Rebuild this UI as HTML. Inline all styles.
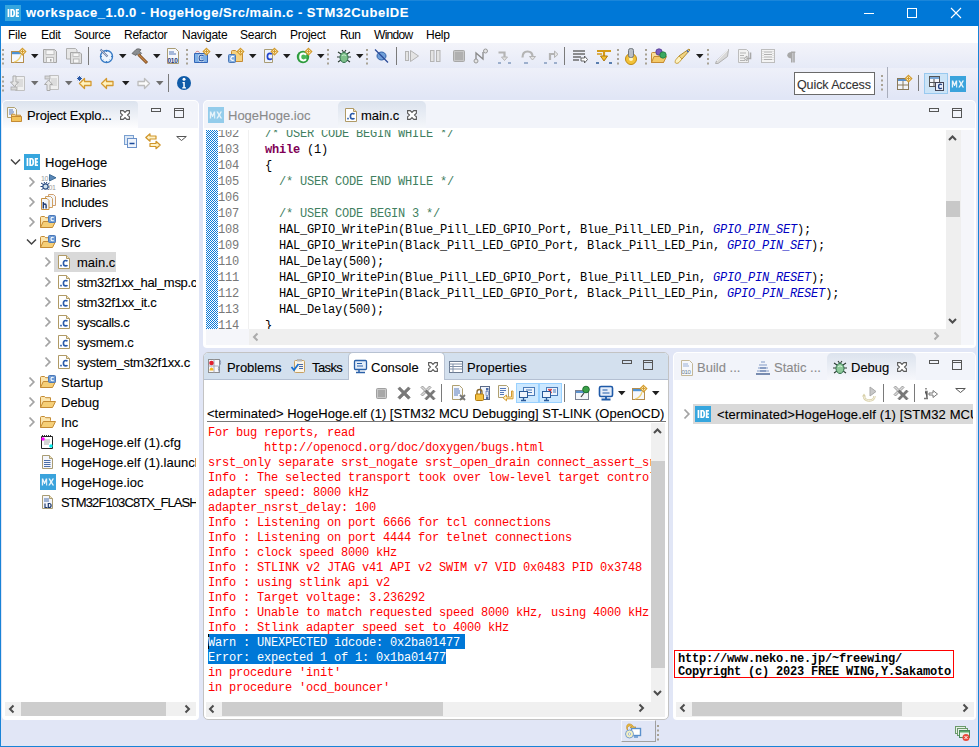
<!DOCTYPE html>
<html><head><meta charset="utf-8">
<style>
*{margin:0;padding:0;box-sizing:border-box}
html,body{width:979px;height:747px;overflow:hidden;background:#E1E6F6;position:relative;font-family:"Liberation Sans",sans-serif;font-size:13px;color:#000}
.a{position:absolute}
.t{position:absolute;white-space:pre;line-height:16px;padding-top:1px;-webkit-text-stroke:0.1px currentColor}
.m{padding-top:0;-webkit-text-stroke:0}
.m{font-family:"Liberation Mono",monospace;font-size:12px;letter-spacing:-0.2px}
svg{position:absolute;overflow:visible}
</style></head><body>
<!-- window borders -->
<div class="a" style="left:0;top:0;width:1px;height:747px;background:#1883d7"></div>
<div class="a" style="left:978px;top:0;width:1px;height:747px;background:#1883d7"></div>
<div class="a" style="left:0;top:746px;width:979px;height:1px;background:#1883d7"></div>

<!-- title bar -->
<div class="a" style="left:0;top:0;width:979px;height:26px;background:#0078D7"></div>
<div class="a" style="left:0;top:0;width:979px;height:1px;background:#1a86da"></div>

<div class="t" style="left:26px;top:4px;font-size:13px;letter-spacing:0.5px;font-weight:bold;color:#fff">workspace_1.0.0 - HogeHoge/Src/main.c - STM32CubeIDE</div>
<div class="a" style="left:864px;top:13px;width:10px;height:1px;background:#fff"></div>
<div class="a" style="left:907px;top:8px;width:10px;height:10px;border:1px solid #fff"></div>
<svg style="left:951px;top:8px" width="10" height="10"><path d="M0 0L10 10M10 0L0 10" stroke="#fff" stroke-width="1.1"/></svg>

<!-- menu bar -->
<div class="a" style="left:1px;top:26px;width:977px;height:17px;background:#fff"></div>
<div class="t" style="left:8px;top:26px;font-size:12px;line-height:16px;-webkit-text-stroke:0;letter-spacing:-0.25px">File</div>
<div class="t" style="left:41px;top:26px;font-size:12px;line-height:16px;-webkit-text-stroke:0;letter-spacing:-0.25px">Edit</div>
<div class="t" style="left:74px;top:26px;font-size:12px;line-height:16px;-webkit-text-stroke:0;letter-spacing:-0.25px">Source</div>
<div class="t" style="left:124px;top:26px;font-size:12px;line-height:16px;-webkit-text-stroke:0;letter-spacing:-0.25px">Refactor</div>
<div class="t" style="left:182px;top:26px;font-size:12px;line-height:16px;-webkit-text-stroke:0;letter-spacing:-0.25px">Navigate</div>
<div class="t" style="left:240px;top:26px;font-size:12px;line-height:16px;-webkit-text-stroke:0;letter-spacing:-0.25px">Search</div>
<div class="t" style="left:290px;top:26px;font-size:12px;line-height:16px;-webkit-text-stroke:0;letter-spacing:-0.25px">Project</div>
<div class="t" style="left:340px;top:26px;font-size:12px;line-height:16px;-webkit-text-stroke:0;letter-spacing:-0.6px">Run</div>
<div class="t" style="left:374px;top:26px;font-size:12px;line-height:16px;-webkit-text-stroke:0;letter-spacing:-0.7px">Window</div>
<div class="t" style="left:426px;top:26px;font-size:12px;line-height:16px;-webkit-text-stroke:0;letter-spacing:-0.25px">Help</div>

<!-- toolbars -->
<div class="a" style="left:1px;top:43px;width:977px;height:25px;background:linear-gradient(#f3f4fa,#e6eaf7)"></div>
<div class="a" style="left:1px;top:68px;width:977px;height:30px;background:linear-gradient(#eef0f9,#e1e6f6)"></div>
<div id="tb"></div>

<!-- ===== Project Explorer ===== -->
<div class="a" style="left:2px;top:100px;width:197px;height:620px;background:#fff;border-radius:5px 5px 4px 4px"></div>
<div class="a" style="left:3px;top:101px;width:195px;height:27px;background:#f2f4fa;border-radius:4px 4px 0 0"></div>
<div class="a" style="left:3px;top:101px;width:135px;height:27px;background:linear-gradient(#dce3ee,#fdfdfe);border-radius:4px 4px 0 0"></div>
<div class="t" style="left:27px;top:107px;font-size:13px;letter-spacing:-0.17px">Project Explo...</div>
<div id="pe">
<div class="a" style="left:5px;top:130px;width:191px;height:572px;overflow:hidden">
<div class="t" style="left:40px;top:24px">HogeHoge</div>
<div class="t" style="left:56px;top:44px;letter-spacing:-0.25px">Binaries</div>
<div class="t" style="left:56px;top:64px;letter-spacing:-0.18px">Includes</div>
<div class="t" style="left:56px;top:84px;letter-spacing:-0.05px">Drivers</div>
<div class="t" style="left:56px;top:104px">Src</div>
<div class="a" style="left:49px;top:122px;width:62px;height:20px;background:#d9d9d9"></div>
<div class="t" style="left:72px;top:124px">main.c</div>
<div class="t" style="left:72px;top:144px;letter-spacing:-0.3px">stm32f1xx_hal_msp.c</div>
<div class="t" style="left:72px;top:164px;letter-spacing:-0.25px">stm32f1xx_it.c</div>
<div class="t" style="left:72px;top:184px;letter-spacing:-0.31px">syscalls.c</div>
<div class="t" style="left:72px;top:204px;letter-spacing:-0.24px">sysmem.c</div>
<div class="t" style="left:72px;top:224px;letter-spacing:-0.27px">system_stm32f1xx.c</div>
<div class="t" style="left:56px;top:244px">Startup</div>
<div class="t" style="left:56px;top:264px">Debug</div>
<div class="t" style="left:56px;top:284px">Inc</div>
<div class="t" style="left:56px;top:304px">HogeHoge.elf (1).cfg</div>
<div class="t" style="left:56px;top:324px">HogeHoge.elf (1).launch</div>
<div class="t" style="left:56px;top:344px">HogeHoge.ioc</div>
<div class="t" style="left:56px;top:364px;letter-spacing:-0.9px">STM32F103C8TX_FLASH.ld</div>
</div>
<div class="a" style="left:5px;top:702px;width:191px;height:14px;background:#f0f0f0"></div>
<div class="a" style="left:21px;top:702px;width:145px;height:14px;background:#cdcdcd"></div>
</div>

<!-- ===== Editor ===== -->
<div class="a" style="left:203px;top:100px;width:773px;height:248px;background:#fff;border-radius:5px 5px 4px 4px"></div>
<div class="a" style="left:204px;top:101px;width:771px;height:27px;background:#f2f4fa;border-radius:4px 4px 0 0"></div>
<div class="a" style="left:338px;top:101px;width:88px;height:27px;background:linear-gradient(#dce3ee,#f4f6fa);border-radius:5px 5px 0 0"></div>
<div class="t" style="left:228px;top:107px;font-size:13px;color:#8a8a8a">HogeHoge.ioc</div>
<div class="t" style="left:361px;top:107px;font-size:13px">main.c</div>
<div id="ed">
<div class="a" style="left:206px;top:130px;width:743px;height:199px;overflow:hidden">
 <svg style="left:0;top:0" width="12" height="199"><defs><pattern id="chk" width="2" height="2" patternUnits="userSpaceOnUse"><rect width="2" height="2" fill="#fff"/><rect width="1" height="1" fill="#0a79d8"/><rect x="1" y="1" width="1" height="1" fill="#0a79d8"/></pattern></defs><rect width="12" height="199" fill="url(#chk)" shape-rendering="crispEdges"/></svg>
 <div class="t m" style="left:12px;top:-4px;color:#787878">102
103
104
105
106
107
108
109
110
111
112
113
114</div>
 <div class="a" style="left:42px;top:0;width:1px;height:199px;background:#f0f0f0"></div>
 <div class="t m" style="left:45px;top:-4px;color:#000">  <span style="color:#3F7F5F">/* USER CODE BEGIN WHILE */</span>
  <b style="color:#7F0055">while</b> (1)
  {
    <span style="color:#3F7F5F">/* USER CODE END WHILE */</span>

    <span style="color:#3F7F5F">/* USER CODE BEGIN 3 */</span>
    HAL_GPIO_WritePin(Blue_Pill_LED_GPIO_Port, Blue_Pill_LED_Pin, <i style="color:#0000C0">GPIO_PIN_SET</i>);
    HAL_GPIO_WritePin(Black_Pill_LED_GPIO_Port, Black_Pill_LED_Pin, <i style="color:#0000C0">GPIO_PIN_SET</i>);
    HAL_Delay(500);
    HAL_GPIO_WritePin(Blue_Pill_LED_GPIO_Port, Blue_Pill_LED_Pin, <i style="color:#0000C0">GPIO_PIN_RESET</i>);
    HAL_GPIO_WritePin(Black_Pill_LED_GPIO_Port, Black_Pill_LED_Pin, <i style="color:#0000C0">GPIO_PIN_RESET</i>);
    HAL_Delay(500);
  }</div>
</div>
<div class="a" style="left:946px;top:130px;width:15px;height:215px;background:#efefef"></div>
<div class="a" style="left:946px;top:201px;width:14px;height:16px;background:#c8c8c8"></div>
<div class="a" style="left:961px;top:130px;width:13px;height:215px;background:#f5f6fa"></div>
<div class="a" style="left:206px;top:329px;width:43px;height:16px;background:#f5f6fa"></div>
<div class="a" style="left:249px;top:329px;width:697px;height:16px;background:#efefef"></div>
</div>

<!-- ===== Console ===== -->
<div class="a" style="left:203px;top:352px;width:466px;height:368px;background:#fff;border:1px solid #c3c3c3;border-radius:5px 5px 5px 5px"></div>
<div class="a" style="left:204px;top:353px;width:464px;height:27px;background:#d3e0ee;border-radius:4px 4px 0 0;border-bottom:1px solid #b4c0d2"></div>
<div class="a" style="left:348px;top:352px;width:97px;height:28px;background:#fff;border:1px solid #b8c2d2;border-bottom:none;border-radius:5px 5px 0 0"></div>
<div class="t" style="left:227px;top:359px;letter-spacing:-0.05px">Problems</div>
<div class="t" style="left:312px;top:359px;letter-spacing:-0.6px">Tasks</div>
<div class="t" style="left:371px;top:359px">Console</div>
<div class="t" style="left:467px;top:359px;letter-spacing:0.05px">Properties</div>
<div class="t" style="left:207px;top:405px">&lt;terminated&gt; HogeHoge.elf (1) [STM32 MCU Debugging] ST-LINK (OpenOCD)</div>
<div class="a" style="left:207px;top:421px;width:459px;height:1px;background:#777"></div>
<div id="co">
<div class="a" style="left:206px;top:423px;width:445px;height:279px;overflow:hidden">
 <div class="a" style="left:2px;top:211px;width:257px;height:15px;background:#0078d7"></div>
 <div class="a" style="left:2px;top:226px;width:238px;height:15px;background:#0078d7"></div>
 <div class="a" style="left:2px;top:211px;width:1px;height:15px;background:#000"></div>
 <div class="t m" style="left:2px;top:3px;line-height:15px;color:#f00">For bug reports, read
        http://openocd.org/doc/doxygen/bugs.html
srst_only separate srst_nogate srst_open_drain connect_assert_srst
Info : The selected transport took over low-level target control.
adapter speed: 8000 kHz
adapter_nsrst_delay: 100
Info : Listening on port 6666 for tcl connections
Info : Listening on port 4444 for telnet connections
Info : clock speed 8000 kHz
Info : STLINK v2 JTAG v41 API v2 SWIM v7 VID 0x0483 PID 0x3748
Info : using stlink api v2
Info : Target voltage: 3.236292
Info : Unable to match requested speed 8000 kHz, using 4000 kHz
Info : Stlink adapter speed set to 4000 kHz
<span style="color:#fff">Warn : UNEXPECTED idcode: 0x2ba01477</span>
<span style="color:#fff">Error: expected 1 of 1: 0x1ba01477</span>
in procedure 'init'
in procedure 'ocd_bouncer'</div>
</div>
<div class="a" style="left:651px;top:423px;width:14px;height:279px;background:#f0f0f0"></div>
<div class="a" style="left:651px;top:461px;width:14px;height:207px;background:#cdcdcd"></div>
<div class="a" style="left:206px;top:702px;width:459px;height:15px;background:#f0f0f0"></div>
<div class="a" style="left:222px;top:702px;width:221px;height:14px;background:#cdcdcd"></div>
</div>

<!-- ===== Debug ===== -->
<div class="a" style="left:673px;top:352px;width:303px;height:368px;background:#fff;border-radius:5px 5px 4px 4px"></div>
<div class="a" style="left:674px;top:353px;width:301px;height:27px;background:#f2f4fa;border-radius:4px 4px 0 0"></div>
<div class="a" style="left:827px;top:353px;width:89px;height:27px;background:linear-gradient(#dce3ee,#f6f7fb);border-radius:5px 5px 0 0"></div>
<div class="t" style="left:697px;top:359px;color:#8a8a8a">Build ...</div>
<div class="t" style="left:774px;top:359px;color:#8a8a8a">Static ...</div>
<div class="t" style="left:851px;top:359px">Debug</div>
<div id="db">
<div class="a" style="left:676px;top:403px;width:297px;height:299px;overflow:hidden">
<div class="a" style="left:17px;top:1px;width:290px;height:20px;background:#d9d9d9"></div>
<div class="t" style="left:41px;top:3px;letter-spacing:0.12px">&lt;terminated&gt;HogeHoge.elf (1) [STM32 MCU Debugging] ST-LINK (OpenOCD)</div>
</div>
<div class="a" style="left:674px;top:650px;width:280px;height:28px;border:1px solid #f00;background:#fff"></div>
<div class="t m" style="left:678px;top:653px;font-weight:bold;line-height:13px">http://www.neko.ne.jp/~freewing/
Copyright (c) 2023 FREE WING,Y.Sakamoto</div>
<div class="a" style="left:676px;top:702px;width:298px;height:15px;background:#f0f0f0"></div>
<div class="a" style="left:692px;top:702px;width:210px;height:14px;background:#cdcdcd"></div>
</div>

<svg width="0" height="0" style="position:absolute"><defs><symbol id="ide" viewBox="0 0 16 16" overflow="visible"><rect width="16" height="16" fill="#36a6de"/><path fill-rule="evenodd" d="M2.6 4h1.7v8H2.6zM5.3 4h2.3c1.7 0 2.5 1.3 2.5 4s-.8 4-2.5 4H5.3zM7 5.5v5h.5c.6 0 .9-.8.9-2.5s-.3-2.5-.9-2.5zM10.8 4h3.2v1.5h-1.5v1.7H14v1.5h-1.5v1.8H14V12h-3.2z" fill="#fff"/></symbol><symbol id="mx" viewBox="0 0 16 16" overflow="visible"><rect width="16" height="16" fill="#3aa3dc"/><path d="M1.8 11.5v-7h1.4l1.3 3.3 1.3-3.3h1.4v7H6.1V7.4L5 10.1h-.9L3.1 7.4v4.1zM8.4 4.5h1.6l1.2 2.2 1.2-2.2H14l-1.9 3.4 2 3.6h-1.6l-1.3-2.3-1.3 2.3H8.3l2-3.6z" fill="#eaf5fb"/></symbol><symbol id="mxl" viewBox="0 0 16 16" overflow="visible"><rect width="16" height="16" fill="#93cceb"/><path d="M1.8 11.5v-7h1.4l1.3 3.3 1.3-3.3h1.4v7H6.1V7.4L5 10.1h-.9L3.1 7.4v4.1zM8.4 4.5h1.6l1.2 2.2 1.2-2.2H14l-1.9 3.4 2 3.6h-1.6l-1.3-2.3-1.3 2.3H8.3l2-3.6z" fill="#e6f3fa"/></symbol><symbol id="chevR" viewBox="0 0 16 16" overflow="visible"><path d="M1.5 3.5l4.3 4.5-4.3 4.5" stroke="#a4a4a4" stroke-width="1.8" fill="none"/></symbol><symbol id="chevD" viewBox="0 0 16 16" overflow="visible"><path d="M1 5.5l4.5 4.5 4.5-4.5" stroke="#444" stroke-width="1.5" fill="none"/></symbol><symbol id="chevRd" viewBox="0 0 16 16" overflow="visible"><path d="M1 1l4 4-4 4" stroke="#555" stroke-width="1.6" fill="none"/></symbol><symbol id="fold" viewBox="0 0 16 16" overflow="visible"><path d="M.5 12.5V2.5c0-.6.4-1 1-1h3l1.2 1.2h4.8v3" fill="#fbe6b0" stroke="#c58b34"/><path d="M.5 12.5l2.8-6h12.2l-3 6z" fill="#f5cf78" stroke="#c58b34" stroke-linejoin="round"/></symbol><symbol id="foldc" viewBox="0 0 16 16" overflow="visible"><path d="M.5 12.5V2.5c0-.6.4-1 1-1h3l1.2 1.2h4.8v3" fill="#fbe6b0" stroke="#c58b34"/><path d="M.5 12.5l2.8-6h12.2l-3 6z" fill="#f5cf78" stroke="#c58b34" stroke-linejoin="round"/><rect x="8.5" y=".5" width="7" height="7" rx="1" fill="#6f9cd6" stroke="#4a78b8"/><path d="M13.6 2.6c-.3-.3-.7-.4-1.1-.4-.9 0-1.5.7-1.5 1.8s.6 1.8 1.5 1.8c.4 0 .8-.1 1.1-.4" stroke="#fff" stroke-width="1.1" fill="none"/></symbol><symbol id="cfile" viewBox="0 0 16 16" overflow="visible"><path d="M2.5 1.5h8l3 3v10h-11z" fill="#fff" stroke="#b09a66"/><path d="M10.5 1.5v3h3" fill="#efe2bc" stroke="#b09a66"/><rect x="4.2" y="10.8" width="1.6" height="1.6" fill="#2a5aa8"/><path d="M11.5 7.2c-.5-.5-1.1-.7-1.8-.7-1.4 0-2.3 1.1-2.3 2.7s.9 2.7 2.3 2.7c.7 0 1.3-.2 1.8-.7" stroke="#2a5aa8" stroke-width="1.6" fill="none"/></symbol><symbol id="cfg" viewBox="0 0 16 16" overflow="visible"><path d="M1.5 2.5h11v12h-11z" fill="#fff" stroke="#222"/><path d="M2 1.5h10" stroke="#333" stroke-dasharray="1 1"/><path d="M4 6h6M4 8h6M4 10h5" stroke="#aaa"/><circle cx="3" cy="5" r="1.8" fill="#f0f"/><circle cx="11" cy="12" r="1.8" fill="#0ee"/></symbol><symbol id="launch" viewBox="0 0 16 16" overflow="visible"><path d="M2.5 1.5h7l3 3v10h-10z" fill="#f4f6fb" stroke="#a99c74"/><path d="M9.5 1.5v3h3" fill="#efe2bc" stroke="#a99c74"/><path d="M4 6.5h6.5M4 8.5h6.5M4 10.5h6.5M4 12.5h6.5" stroke="#4c6ea8"/></symbol><symbol id="ld" viewBox="0 0 16 16" overflow="visible"><path d="M2.5 1.5h7l3 3v10h-10z" fill="#f4f6fb" stroke="#a99c74"/><path d="M9.5 1.5v3h3" fill="#efe2bc" stroke="#a99c74"/><path d="M4 5h5M4 7h5" stroke="#4c6ea8"/><path d="M5 9.5v4h2.3M8.3 9.5v4h1c1.2 0 1.8-.6 1.8-2s-.6-2-1.8-2z" stroke="#1e3a6e" stroke-width="1.2" fill="none"/></symbol><symbol id="bin" viewBox="0 0 16 16" overflow="visible"><text x="1" y="6.5" font-family="Liberation Sans" font-size="7" fill="#9a9a9a" letter-spacing="-.4">10</text><path d="M9.5 .5v6.5L16 3.8z" fill="#5a88b8" stroke="#2a5a88" stroke-width=".8"/><path d="M1 9l2.5 1.5M.5 12.5h3M1.5 16l2-2M9.5 9L7.5 10.5M9.5 13H7.5M8.5 16l-1.5-2M4 8l1 1.5M7 8l-1 1.5" stroke="#1f3f7a" stroke-width="1"/><circle cx="5.5" cy="12.5" r="2.6" fill="#cfe0ec" stroke="#2a4a80" stroke-width="1.1"/><text x="8.5" y="15.5" font-family="Liberation Sans" font-size="7" fill="#9a9a9a" letter-spacing="-.4">01</text></symbol><symbol id="inc" viewBox="0 0 16 16" overflow="visible"><path d="M8.5 .5h5l2 2v9h-7z" fill="#f4f7fb" stroke="#d0a070"/><path d="M5.5 2.5h5l2 2v9h-7z" fill="#f4f7fb" stroke="#d0a060"/><path d="M1.5 4.5h5.5l2 2v9H1.5z" fill="#f4f7fb" stroke="#c89040"/><path d="M3.3 8v6.5M3.3 11c.4-.7 1-1 1.6-1s1.2.4 1.2 1.3v3.2" stroke="#203a70" stroke-width="1.4" fill="none"/></symbol><symbol id="grip" viewBox="0 0 16 16" overflow="visible"><rect x="0" y="0" width="2" height="2" fill="#a8a294"/><rect x="0" y="4.5" width="2" height="2" fill="#a8a294"/><rect x="0" y="9" width="2" height="2" fill="#a8a294"/><rect x="0" y="13.5" width="2" height="2" fill="#a8a294"/></symbol><symbol id="dd" viewBox="0 0 16 16" overflow="visible"><path d="M0 0h7.5l-3.75 4.2z" fill="#1e1e1e"/></symbol><symbol id="ddg" viewBox="0 0 16 16" overflow="visible"><path d="M0 0h7.5l-3.75 4.2z" fill="#6e6e6e"/></symbol><symbol id="closex" viewBox="0 0 16 16" overflow="visible"><path d="M.6 .6h2.6l1.8 1.9L6.8.6h2.6v2.6L7.5 5l1.9 1.8v2.6H6.8L5 7.5 3.2 9.4H.6V6.8L2.5 5 .6 3.2z" fill="#fff" stroke="#5a5a5a" stroke-width="1.1" stroke-linejoin="miter"/></symbol><symbol id="minb" viewBox="0 0 16 16" overflow="visible"><rect x=".5" y=".5" width="9" height="3" fill="none" stroke="#555"/></symbol><symbol id="maxb" viewBox="0 0 16 16" overflow="visible"><rect x=".5" y=".5" width="9" height="9" fill="none" stroke="#555"/><path d="M1 2.5h8" stroke="#555"/></symbol><symbol id="vmenu" viewBox="0 0 16 16" overflow="visible"><path d="M.7 .5h9.6L5.5 4.5z" fill="#fff" stroke="#555" stroke-width="1"/></symbol><symbol id="new" viewBox="0 0 16 16" overflow="visible"><rect x="1.5" y="3.5" width="12" height="11" fill="#f6f8fc" stroke="#b58e4e"/><rect x="2" y="4" width="11" height="2.2" fill="#4f93d4"/><path d="M4 14c4-1 6-3 7-7" stroke="#f0d070" stroke-width="1.2" fill="none"/><path d="M12.5 .3l3.3 3.3-3.3 3.3-3.3-3.3z" fill="#fff6d0" stroke="#d39a2a" stroke-width="1.1"/><path d="M12.5 1.6v4M10.5 3.6h4" stroke="#d39a2a" stroke-width="1"/></symbol><symbol id="save" viewBox="0 0 16 16" overflow="visible"><path d="M1.5 1.5h11l2 2v11h-13z" fill="#e0e0e0" stroke="#a5a5a5"/><rect x="4" y="2" width="8" height="4.5" fill="#f6f6f6" stroke="#b8b8b8" stroke-width=".8"/><rect x="4.5" y="9.5" width="7" height="5" fill="#f6f6f6" stroke="#b0b0b0" stroke-width=".8"/><rect x="8" y="11" width="1.5" height="2.5" fill="#aaa"/></symbol><symbol id="saveall" viewBox="0 0 16 16" overflow="visible"><path d="M.5 .5h9l1.5 1.5v9h-10.5z" fill="#e6e6e6" stroke="#b0b0b0"/><path d="M4.5 4.5h9.5l1.5 1.5v9.5h-11z" fill="#e0e0e0" stroke="#a5a5a5"/><rect x="7" y="5" width="6" height="3.5" fill="#f6f6f6" stroke="#b8b8b8" stroke-width=".8"/><rect x="7.5" y="11" width="5.5" height="4" fill="#f6f6f6" stroke="#b0b0b0" stroke-width=".8"/></symbol><symbol id="clock" viewBox="0 0 16 16" overflow="visible"><circle cx="7.5" cy="8.5" r="6" fill="#eef5fd" stroke="#3a7cc6" stroke-width="1.4"/><path d="M7.5 2.5v1.5M7.5 13v1.5M1.5 8.5H3M12 8.5h1.5M3.3 4.3l1 1M10.7 11.7l1 1M3.3 12.7l1-1" stroke="#3a7cc6"/><path d="M1.5 1.5l7 7" stroke="#6b7ea3" stroke-width="2"/><path d="M1.5 1.5l7 7" stroke="#c9d6ea" stroke-width=".8"/></symbol><symbol id="hammer" viewBox="0 0 16 16" overflow="visible"><path d="M1 5.5l4-4c1.5-1 3.5-.8 5 .3l-1.5 1.5 2 2-2.5 2.5-2-2L5 7.5z" fill="#8b8e90" stroke="#5a5d60" stroke-width=".8"/><path d="M7.5 6.5l8.5 8.5" stroke="#7a4a1c" stroke-width="3"/><path d="M7.5 6.5l8 8" stroke="#c8864a" stroke-width="1.2"/></symbol><symbol id="doc010" viewBox="0 0 16 16" overflow="visible"><path d="M1.5 .5h8l3 3v12h-11z" fill="#f6f8fc" stroke="#a99c74"/><path d="M3 4h5M3 6h7" stroke="#5478b8"/><text x="1.5" y="14.5" font-family="Liberation Sans" font-weight="bold" font-size="6.5" fill="#1f3a78" letter-spacing="-.3">010</text></symbol><symbol id="cproj" viewBox="0 0 16 16" overflow="visible"><path d="M.5 5.5h13v9h-13z" fill="#7fb0e6" stroke="#3366b8"/><path d="M1.5 4.5c1-1.5 3-1.5 4 0" stroke="#d07070" fill="none"/><path d="M9.5 8c-.5-.6-1.1-.9-1.9-.9-1.5 0-2.5 1.1-2.5 2.9s1 2.9 2.5 2.9c.8 0 1.4-.3 1.9-.9" stroke="#fff" stroke-width="2.4" fill="none"/><path d="M9.5 8c-.5-.6-1.1-.9-1.9-.9-1.5 0-2.5 1.1-2.5 2.9s1 2.9 2.5 2.9c.8 0 1.4-.3 1.9-.9" stroke="#2a5aa8" stroke-width="1.3" fill="none"/><path d="M12.5 .3l3.3 3.3-3.3 3.3-3.3-3.3z" fill="#fff6d0" stroke="#d39a2a" stroke-width="1.1"/><path d="M12.5 1.6v4M10.5 3.6h4" stroke="#d39a2a" stroke-width="1"/></symbol><symbol id="cfold" viewBox="0 0 16 16" overflow="visible"><path d="M3.5 13.5V3.5c0-.6.4-1 1-1h3l1.2 1.2h5.8v9.8z" fill="#f7d27f" stroke="#c58b34"/><rect x=".5" y="6.5" width="7" height="8" rx="1" fill="#84aee0" stroke="#4a78b8"/><path d="M5.9 8.8c-.3-.3-.7-.5-1.2-.5-1 0-1.6.8-1.9 2s.9 2 1.9 2c.5 0 .9-.2 1.2-.5" stroke="#fff" stroke-width="1.2" fill="none"/><path d="M12.5 .3l3.3 3.3-3.3 3.3-3.3-3.3z" fill="#fff6d0" stroke="#d39a2a" stroke-width="1.1"/><path d="M12.5 1.6v4M10.5 3.6h4" stroke="#d39a2a" stroke-width="1"/></symbol><symbol id="cnew" viewBox="0 0 16 16" overflow="visible"><path d="M2.5 1.5h8v13h-8z" fill="#eef3fb" stroke="#a99c74"/><path d="M9.8 6.3c-.5-.6-1.1-.9-1.9-.9-1.5 0-2.5 1.2-2.5 3s1 3 2.5 3c.8 0 1.4-.3 1.9-.9" stroke="#2244cc" stroke-width="1.7" fill="none"/><path d="M12.5 .3l3.3 3.3-3.3 3.3-3.3-3.3z" fill="#fff6d0" stroke="#d39a2a" stroke-width="1.1"/><path d="M12.5 1.6v4M10.5 3.6h4" stroke="#d39a2a" stroke-width="1"/></symbol><symbol id="cgreen" viewBox="0 0 16 16" overflow="visible"><circle cx="7" cy="9" r="6.2" fill="#2e9a3e"/><circle cx="7" cy="9" r="4.5" fill="#48b858"/><path d="M10 6.8c-.7-.8-1.6-1.2-2.6-1.2-1.9 0-3.2 1.4-3.2 3.4s1.3 3.4 3.2 3.4c1 0 1.9-.4 2.6-1.2" stroke="#fff" stroke-width="2" fill="none"/><path d="M12.5 .3l3.3 3.3-3.3 3.3-3.3-3.3z" fill="#fff6d0" stroke="#d39a2a" stroke-width="1.1"/><path d="M12.5 1.6v4M10.5 3.6h4" stroke="#d39a2a" stroke-width="1"/></symbol><symbol id="bug" viewBox="0 0 16 16" overflow="visible"><path d="M2 4l3 2M14 4l-3 2M1 9h3M15 9h-3M2 14l3-2M14 14l-3-2M6 2l1.5 2M10 2l-1.5 2" stroke="#2a3a30" stroke-width="1.1"/><ellipse cx="8" cy="9.5" rx="4" ry="5" fill="#7ec08a" stroke="#2f6f4a"/><path d="M6 8c1-1.5 3-1.5 4 0" stroke="#c8ecd0" fill="none"/></symbol><symbol id="skipbp" viewBox="0 0 16 16" overflow="visible"><ellipse cx="7.5" cy="8" rx="4.5" ry="4" fill="#6f9fd8" stroke="#2f5fa8"/><path d="M1 1.5l13 13" stroke="#2a4a98" stroke-width="1.3"/></symbol><symbol id="resume" viewBox="0 0 16 16" overflow="visible"><rect x="1.5" y="3.5" width="3" height="9" fill="#e4e4e4" stroke="#b4b4b4"/><path d="M6.5 2.5v11l8-5.5z" fill="#e4e4e4" stroke="#b4b4b4"/></symbol><symbol id="suspend" viewBox="0 0 16 16" overflow="visible"><rect x="2.5" y="2.5" width="3.5" height="11" fill="#e4e4e4" stroke="#b4b4b4"/><rect x="8.5" y="2.5" width="3.5" height="11" fill="#e4e4e4" stroke="#b4b4b4"/></symbol><symbol id="term" viewBox="0 0 16 16" overflow="visible"><rect x="2.5" y="2.5" width="11" height="11" rx="1" fill="#c6c6c6" stroke="#a8a8a8"/><rect x="4" y="4" width="8" height="8" fill="#b0b0b0"/></symbol><symbol id="disc" viewBox="0 0 16 16" overflow="visible"><circle cx="3" cy="13" r="2" fill="#e4e4e4" stroke="#999"/><circle cx="12.5" cy="3" r="2" fill="#e4e4e4" stroke="#999"/><path d="M3 11V5l7 6V4" stroke="#888" stroke-width="1.3" fill="none"/></symbol><symbol id="stepinto" viewBox="0 0 16 16" overflow="visible"><path d="M1.5 4.5h6v5" stroke="#b4b4b4" stroke-width="2.2" fill="none"/><path d="M4.5 9h6l-3 3.5z" fill="#e4e4e4" stroke="#b4b4b4"/><path d="M1 15h3M11 15h3" stroke="#5a7aa8" stroke-width="1.5" opacity=".7"/></symbol><symbol id="stepover" viewBox="0 0 16 16" overflow="visible"><path d="M2.5 9.5c0-4 2-6 5-6s5 2 5 5" stroke="#b4b4b4" stroke-width="2.2" fill="none"/><path d="M9.5 8.5h6l-3 3.5z" fill="#e4e4e4" stroke="#b4b4b4"/><path d="M4 15h4" stroke="#5a7aa8" stroke-width="1.5" opacity=".7"/></symbol><symbol id="stepret" viewBox="0 0 16 16" overflow="visible"><path d="M7 12V6h5" stroke="#b4b4b4" stroke-width="2.2" fill="none"/><path d="M11.5 3v6.5l3.5-3.2z" fill="#e4e4e4" stroke="#b4b4b4"/><path d="M1 15h3M11 15h3" stroke="#5a7aa8" stroke-width="1.5" opacity=".7"/></symbol><symbol id="lines" viewBox="0 0 16 16" overflow="visible"><path d="M1 3h12M1 6h12M1 9h8M1 12h6" stroke="#6b6b6b" stroke-width="1.3"/><path d="M9 10h3.5V8l3 3.5-3 3.5v-2H9z" fill="#fff" stroke="#555" stroke-width=".9"/></symbol><symbol id="stepfilt" viewBox="0 0 16 16" overflow="visible"><path d="M1 3h14M8 3v9" stroke="#d49a18" stroke-width="2.2"/><path d="M4.5 8h7l-3.5 5z" fill="#f4c030" stroke="#b07a10"/><path d="M1 6h5" stroke="#d49a18" stroke-width="1.5"/><path d="M0 15h3M13 15h3" stroke="#2a5a98" stroke-width="1.6"/></symbol><symbol id="gear" viewBox="0 0 16 16" overflow="visible"><circle cx="8" cy="11" r="5.5" fill="#f2c23a" stroke="#c08a10"/><circle cx="8" cy="11" r="2" fill="#fff4c0"/><rect x="5.5" y=".5" width="5" height="9" rx="2" fill="#b9bec4" stroke="#70767c"/></symbol><symbol id="foldballs" viewBox="0 0 16 16" overflow="visible"><path d="M.5 14.5V5.5c0-.6.4-1 1-1h3l1.2 1.2h6.8v8.8z" fill="#f9df9c" stroke="#c58b34"/><path d="M.5 14.5l2.5-6h12.5l-3 6z" fill="#f3c968" stroke="#c58b34"/><circle cx="8" cy="4" r="3.2" fill="#7a5cc0" stroke="#503a90" stroke-width=".8"/><circle cx="12" cy="7" r="3.2" fill="#3aa860" stroke="#1f7a3e" stroke-width=".8"/></symbol><symbol id="pen" viewBox="0 0 16 16" overflow="visible"><path d="M14 1l1 1-8 9-3-3z" fill="#f1d484" stroke="#b08a30"/><path d="M4 8l3 3-3 3.5c-1 1-3 1-3.5.5s-.5-2.5.5-3.5z" fill="#fdf2c0" stroke="#c8a040"/><path d="M12 2.5l1.5 1.5" stroke="#3060c0" stroke-width="1.5"/></symbol><symbol id="peng" viewBox="0 0 16 16" overflow="visible"><path d="M14.5 1.5l-1 7L4 15.5H1.5l1-2.5z" fill="#d8d8d8" stroke="#b0b0b0"/><path d="M3 13L14 2" stroke="#eee"/></symbol><symbol id="grayic" viewBox="0 0 16 16" overflow="visible"><path d="M1.5 1.5h8l2 2v11h-10z" fill="#f2f2f2" stroke="#bdbdbd"/><path d="M3 5h6M3 7.5h4M3 10h4M3 12.5h5" stroke="#b5b5b5"/><path d="M13.5 4.5v6H9" stroke="#a8a8a8" stroke-width="1.6" fill="none"/><path d="M10 8l-3 2.5 3 2.5z" fill="#e8e8e8" stroke="#a8a8a8"/></symbol><symbol id="graydoc" viewBox="0 0 16 16" overflow="visible"><rect x="1.5" y="1.5" width="13" height="13" fill="#f4f4f4" stroke="#bdbdbd"/><path d="M4 4h8M4 6.5h8M4 9h8M4 11.5h8" stroke="#b0b0b0"/><path d="M3 3v10M13 3v10" stroke="#ccc" stroke-dasharray="1 1"/></symbol><symbol id="pilcrow" viewBox="0 0 16 16" overflow="visible"><path d="M9.8 14.5V4.2h3.5M12 14.5V4.2" stroke="#a8a8a8" stroke-width="1.6" fill="none"/><path d="M9.8 4C6.5 4 5.3 5.5 5.3 7.2s1.2 3.2 4.5 3.2z" fill="#a8a8a8"/></symbol><symbol id="dl" viewBox="0 0 16 16" overflow="visible"><path d="M5.5 1.5h9v14h-9z" fill="#f0f0f0" stroke="#c0c0c0"/><path d="M7 5h6M7 7h6M7 9h6M7 11h6" stroke="#c8c8c8"/><path d="M3 1h3v6h2.5L4.5 11.5.5 7H3z" fill="#e6e6e6" stroke="#aaa"/><rect x="1" y="12" width="6" height="3" fill="#d8d8d8" stroke="#aaa" stroke-width=".8"/></symbol><symbol id="ul" viewBox="0 0 16 16" overflow="visible"><path d="M5.5 .5h9v14h-9z" fill="#f0f0f0" stroke="#c0c0c0"/><path d="M7 4h6M7 6h6M7 8h6M7 10h6" stroke="#c8c8c8"/><path d="M3 15.5h3v-6h2.5L4.5 5 .5 9.5H3z" fill="#e6e6e6" stroke="#aaa"/><rect x="1" y="1" width="5" height="3" fill="#d8d8d8" stroke="#aaa" stroke-width=".8"/></symbol><symbol id="backstar" viewBox="0 0 16 16" overflow="visible"><path d="M2.5 8.5l5-5v3h6.5v4H7.5v3z" fill="#fff2c0" stroke="#d49a30" stroke-width="1.3" stroke-linejoin="round"/><path d="M2.5 1v5M0 3.5h5M.8 1.8l3.4 3.4M4.2 1.8L.8 5.2" stroke="#2a5aa8" stroke-width="1"/></symbol><symbol id="back" viewBox="0 0 16 16" overflow="visible"><path d="M1.5 8.5l5-5v3h6.5v4H6.5v3z" fill="#fff2c0" stroke="#d49a30" stroke-width="1.3" stroke-linejoin="round"/></symbol><symbol id="fwd" viewBox="0 0 16 16" overflow="visible"><path d="M14.5 8.5l-5-5v3H3v4h6.5v3z" fill="#fafafa" stroke="#bcbcbc" stroke-width="1.3" stroke-linejoin="round"/></symbol><symbol id="info" viewBox="0 0 16 16" overflow="visible"><circle cx="8" cy="8" r="7" fill="#0f5ba8"/><circle cx="8" cy="4.3" r="1.5" fill="#fff"/><path d="M6.5 7h2.3v5.2h1.2V13.5H6.2v-1.3h1.1V8.3h-.8z" fill="#fff"/></symbol><symbol id="persp" viewBox="0 0 16 16" overflow="visible"><rect x="1.5" y="3.5" width="11" height="11" fill="#f2f4f8" stroke="#8a7a5a"/><rect x="2" y="4" width="10" height="2" fill="#5a90cc"/><path d="M7 6v8M2 10h10" stroke="#8a7a5a"/><path d="M12.5 .3l3.3 3.3-3.3 3.3-3.3-3.3z" fill="#fff6d0" stroke="#d39a2a" stroke-width="1.1"/><path d="M12.5 1.6v4M10.5 3.6h4" stroke="#d39a2a" stroke-width="1"/></symbol><symbol id="cpersp" viewBox="0 0 16 16" overflow="visible"><rect x="1.5" y="1.5" width="10" height="10" fill="#f4f6fa" stroke="#555"/><rect x="2" y="2" width="9" height="2" fill="#7aa8d8"/><path d="M6 4v7M2 7.5h9" stroke="#555"/><rect x="7.5" y="7.5" width="8" height="8" fill="#e8eef8" stroke="#445"/><path d="M13.8 9.8c-.4-.4-.9-.6-1.4-.6-1.1 0-1.8.8-1.8 2.2s.7 2.2 1.8 2.2c.5 0 1-.2 1.4-.6" stroke="#1e3f80" stroke-width="1.3" fill="none"/></symbol><symbol id="projexp" viewBox="0 0 16 16" overflow="visible"><path d="M1.5 1.5h7l2 2v8h-9z" fill="#f4f6fa" stroke="#b0a070"/><path d="M3 4h4M3 6h5M3 8h4" stroke="#5478b8"/><path d="M5.5 15.5V9c0-.5.3-.8.8-.8h2.2l1 1h5v6.3z" fill="#f7d27f" stroke="#c58b34"/><path d="M5.5 10.5h10v5h-10z" fill="#f3c35a" stroke="#c58b34"/></symbol><symbol id="collapse" viewBox="0 0 16 16" overflow="visible"><rect x="1.5" y="1.5" width="9" height="9" fill="#dce8f6" stroke="#7aa0d0"/><rect x="4.5" y="4.5" width="9" height="9" fill="#eef4fc" stroke="#6a90c8"/><path d="M6.5 9.5h5" stroke="#1a4a9a" stroke-width="1.5"/></symbol><symbol id="link" viewBox="0 0 16 16" overflow="visible"><path d="M.8 4.5L5 .8v2.2h6v3H5v2.2z" fill="#fff3c8" stroke="#d0952a" stroke-width="1.2" stroke-linejoin="round"/><path d="M15.2 12L11 8.3v2.2H5v3h6v2.2z" fill="#fff3c8" stroke="#d0952a" stroke-width="1.2" stroke-linejoin="round"/></symbol><symbol id="problems" viewBox="0 0 16 16" overflow="visible"><rect x="1.5" y="1.5" width="11" height="13" fill="#f8f8fc" stroke="#8c8c8c"/><path d="M1.5 8h10M7 1.5v13" stroke="#aab"/><circle cx="4.5" cy="5" r="2.3" fill="#e02030"/><path d="M2.5 12.5c0-2 1-3 2-3s2 1 2 3z" fill="#f5b820"/><path d="M12.5 1.5c1.5 2 1.5 4 0 6s-1.5 4 0 7" stroke="#8c9ab8" fill="none"/></symbol><symbol id="tasks" viewBox="0 0 16 16" overflow="visible"><rect x="3.5" y="2.5" width="10" height="12" rx="1" fill="#fbf6e8" stroke="#c8a060"/><rect x="6" y="1" width="5" height="2.5" fill="#b8b8b8"/><path d="M8 6.5h4M8 8.5h4M8 10.5h4" stroke="#4a6aa8"/><path d="M.5 9l2.5 3 4.5-6" stroke="#1a70d0" stroke-width="1.8" fill="none"/></symbol><symbol id="console" viewBox="0 0 16 16" overflow="visible"><rect x="1.5" y="1.5" width="12" height="9" rx="1" fill="#e4eefa" stroke="#2a60a8" stroke-width="1.3"/><path d="M4 4.5h5M4 7h6" stroke="#2a60a8"/><path d="M6 11v2M3 13.5h9" stroke="#2a60a8" stroke-width="1.5"/></symbol><symbol id="properties" viewBox="0 0 16 16" overflow="visible"><rect x="1.5" y="2.5" width="13" height="11" fill="#fff" stroke="#6a7a90"/><path d="M1.5 5h13M5 5v8.5M1.5 7.5h13M1.5 10h13" stroke="#8090a8"/></symbol><symbol id="build" viewBox="0 0 16 16" overflow="visible"><path d="M1.5 .5h8l3 3v12h-11z" fill="#f6f8fc" stroke="#c4b898"/><path d="M3 4h5M3 6h6" stroke="#9ab0d8"/><text x="1.5" y="14" font-family="Liberation Sans" font-size="6" fill="#6a7890" letter-spacing="-.3">010</text></symbol><symbol id="static" viewBox="0 0 16 16" overflow="visible"><path d="M6 2h4M4 5h8M3 8h10M2 11h12" stroke="#a8b8d8" stroke-width="1.5"/><path d="M1 14h14" stroke="#6a80a8" stroke-width="1.8"/><path d="M5 8h6M5 11h6" stroke="#7a90b8" stroke-width="1.5"/></symbol><symbol id="bugt" viewBox="0 0 16 16" overflow="visible"><path d="M2 4l3 2M14 4l-3 2M1 9h3M15 9h-3M2 14l3-2M14 14l-3-2M6 2l1.5 2M10 2l-1.5 2" stroke="#2a3a30" stroke-width="1.1"/><ellipse cx="8" cy="9.5" rx="4" ry="5" fill="#8cc898" stroke="#2f6f4a"/><path d="M6 8c1-1.5 3-1.5 4 0" stroke="#d8f4e0" fill="none"/></symbol><symbol id="stopg" viewBox="0 0 16 16" overflow="visible"><rect x="1.5" y="1.5" width="10" height="10" rx="1" fill="#c8c8c8" stroke="#a0a0a0"/><rect x="3" y="3" width="7" height="7" fill="#a8a8a8"/></symbol><symbol id="xg" viewBox="0 0 16 16" overflow="visible"><path d="M2 4l2-2 4.5 4.5L13 2l2 2-4.5 4.5L15 13l-2 2-4.5-4.5L4 15l-2-2 4.5-4.5z" transform="translate(-1 -1) scale(.95)" fill="#7a7a7a" stroke="#666" stroke-width=".6"/></symbol><symbol id="xxg" viewBox="0 0 16 16" overflow="visible"><path d="M1 2.5l1.5-1.5 3.5 3.5 3.5-3.5L11 2.5 7.5 6 11 9.5 9.5 11 6 7.5 2.5 11 1 9.5 4.5 6z" fill="#d8d8d8" stroke="#888" stroke-width=".8"/><path d="M5 6.5l1.5-1.5 3.5 3.5 3.5-3.5L15 6.5 11.5 10l3.5 3.5L13.5 15 10 11.5 6.5 15 5 13.5 8.5 10z" fill="#7a7a7a" stroke="#555" stroke-width=".6"/></symbol><symbol id="docx" viewBox="0 0 16 16" overflow="visible"><path d="M1.5 .5h7l3 3v11h-10z" fill="#f6f8fc" stroke="#b0a070"/><path d="M3 4h5M3 6h6M3 8h6M3 10h4" stroke="#5478b8"/><path d="M9 10l5 5M14 10l-5 5" stroke="#777" stroke-width="1.8"/></symbol><symbol id="lockic" viewBox="0 0 16 16" overflow="visible"><rect x="6.5" y="1.5" width="9" height="13" fill="#f0f4fa" stroke="#5a6a88"/><rect x="12" y="3" width="2.5" height="2.5" fill="#4a6aa8"/><rect x="12" y="6.5" width="2.5" height="4" fill="#e8eef8" stroke="#4a6aa8" stroke-width=".6"/><rect x="12" y="11.5" width="2.5" height="2.5" fill="#4a6aa8"/><path d="M3 9V7c0-1.5 1-2.5 2.5-2.5S8 5.5 8 7v2" stroke="#8a6a30" stroke-width="1.3" fill="none"/><rect x="1.5" y="9" width="8" height="6.5" rx="1" fill="#f3c040" stroke="#b07a10"/></symbol><symbol id="docarr" viewBox="0 0 16 16" overflow="visible"><path d="M1.5 .5h8l2 2v10h-10z" fill="#f6f8fc" stroke="#b0a070"/><path d="M3 3.5h6M3 5.5h6M3 7.5h4M3 9.5h4" stroke="#5478b8"/><path d="M14.5 6v6h-5v-2L6 12.8l3.5 3v-2h6.5V6z" fill="#fff2c0" stroke="#d49a30"/></symbol><symbol id="monsel" viewBox="0 0 16 16" overflow="visible"><rect x="4.5" y="2.5" width="11" height="8" fill="#eef4fc" stroke="#4a7ab8"/><path d="M7 5h6M7 7.5h6" stroke="#4a7ab8"/><rect x=".5" y="6.5" width="8" height="6" fill="#eef4fc" stroke="#2a5a98"/><path d="M4.5 13v2M2 15.5h5" stroke="#2a5a98" stroke-width="1.3"/></symbol><symbol id="monx" viewBox="0 0 16 16" overflow="visible"><rect x="4.5" y="2.5" width="11" height="8" fill="#eef4fc" stroke="#4a7ab8"/><path d="M6.5 4l3 4M9.5 4l-3 4" stroke="#e03030" stroke-width="1.4"/><path d="M11 5h3M11 7h3" stroke="#4a7ab8"/><rect x=".5" y="6.5" width="8" height="6" fill="#eef4fc" stroke="#2a5a98"/><path d="M4.5 13v2M2 15.5h5" stroke="#2a5a98" stroke-width="1.3"/></symbol><symbol id="pin" viewBox="0 0 16 16" overflow="visible"><rect x=".5" y="5.5" width="13" height="9" fill="#f4f6fa" stroke="#7a8090"/><rect x="1" y="6" width="12" height="2" fill="#5a90cc"/><path d="M6 12l3-4" stroke="#444" stroke-width="1.2"/><circle cx="11" cy="4.5" r="3.3" fill="#3aa048" stroke="#1f7030"/></symbol><symbol id="monbig" viewBox="0 0 16 16" overflow="visible"><rect x="1.5" y="1.5" width="13" height="10" rx="1.5" fill="#e6eefa" stroke="#1f5aa8" stroke-width="1.6"/><path d="M4.5 5h5M4.5 8h7" stroke="#1f5aa8"/><path d="M8 12v2M3.5 14.5h9" stroke="#1f5aa8" stroke-width="1.8"/></symbol><symbol id="relaunch" viewBox="0 0 16 16" overflow="visible"><path d="M8 1v9l6-4.5z" fill="#c8c8c8" stroke="#a8a8a8"/><path d="M12.5 10c0 3-2 4.5-5 4.5S2 13 2 10.5" stroke="#d8d0a8" stroke-width="2.4" fill="none"/><path d="M12.5 10c0 3-2 4.5-5 4.5S2 13 2 10.5" stroke="#f4f0e0" stroke-width="1" fill="none"/><path d="M0 10.5l2-3 2 3z" fill="#d8d0a8"/></symbol><symbol id="iarrow" viewBox="0 0 16 16" overflow="visible"><path d="M3 2v1.5M2 5.5h2v7M1 12.5h4" stroke="#777" stroke-width="1.5"/><path d="M6 7h4V4.5l4.5 3.5-4.5 3.5V9H6z" fill="#fff" stroke="#777"/></symbol><symbol id="stbtn" viewBox="0 0 16 16" overflow="visible"><path d="M4 1c2 0 4 1 4.5 3H11l-3 3-3-3h2C6.5 3 5.5 2.5 4 3 2.5 3.5 2 5 2.5 7 1 5 1.5 1 4 1z" fill="#f0c040" stroke="#c08a20" stroke-width=".7"/><rect x="6.5" y="5.5" width="9" height="7" fill="#fff" stroke="#5a90cc" stroke-width="1.4"/><path d="M9 14h4" stroke="#5a90cc" stroke-width="1.4"/><circle cx="4.5" cy="11" r="4" fill="#f4f0c0" stroke="#7aa0d0"/><circle cx="4.5" cy="11" r="1.2" fill="#fff" stroke="#7aa0d0" stroke-width=".7"/></symbol><symbol id="stright" viewBox="0 0 16 16" overflow="visible"><rect x="1.5" y="1.5" width="10" height="7" fill="#e8f0e8" stroke="#6a9a6a"/><rect x="3.5" y="3.5" width="10" height="7" fill="#e8f0e8" stroke="#6a9a6a"/><rect x="5.5" y="5.5" width="10" height="7" fill="#e8f4e8" stroke="#4a8a5a"/><rect x="6" y="6" width="9" height="1.5" fill="#5aa868"/><circle cx="12" cy="12.5" r="3.5" fill="#e84a3a"/><path d="M10.5 11l3 3M13.5 11l-3 3" stroke="#fff" stroke-width="1"/></symbol><symbol id="sUp" viewBox="0 0 16 16" overflow="visible"><path d="M1 6l3.5-3.5L8 6" stroke="#4d4d4d" stroke-width="2" fill="none"/></symbol><symbol id="sDown" viewBox="0 0 16 16" overflow="visible"><path d="M1 2l3.5 3.5L8 2" stroke="#4d4d4d" stroke-width="2" fill="none"/></symbol><symbol id="sLeft" viewBox="0 0 16 16" overflow="visible"><path d="M5.5 .5L2 4l3.5 3.5" stroke="#4d4d4d" stroke-width="2" fill="none"/></symbol><symbol id="sRight" viewBox="0 0 16 16" overflow="visible"><path d="M1.5 .5L5 4 1.5 7.5" stroke="#4d4d4d" stroke-width="2" fill="none"/></symbol><symbol id="sLeftL" viewBox="0 0 16 16" overflow="visible"><path d="M5.5 .5L2 4l3.5 3.5" stroke="#ababab" stroke-width="2" fill="none"/></symbol><symbol id="sRightL" viewBox="0 0 16 16" overflow="visible"><path d="M1.5 .5L5 4 1.5 7.5" stroke="#ababab" stroke-width="2" fill="none"/></symbol></defs></svg>
<svg style="left:10px;top:154px" width="16" height="16"><use href="#chevD"/></svg>
<svg style="left:24px;top:154px" width="16" height="16"><use href="#ide"/></svg>
<svg style="left:28px;top:174px" width="16" height="16"><use href="#chevR"/></svg>
<svg style="left:40px;top:174px" width="16" height="16"><use href="#bin"/></svg>
<svg style="left:28px;top:194px" width="16" height="16"><use href="#chevR"/></svg>
<svg style="left:40px;top:194px" width="16" height="16"><use href="#inc"/></svg>
<svg style="left:28px;top:214px" width="16" height="16"><use href="#chevR"/></svg>
<svg style="left:40px;top:215px" width="16" height="16"><use href="#foldc"/></svg>
<svg style="left:26px;top:234px" width="16" height="16"><use href="#chevD"/></svg>
<svg style="left:40px;top:235px" width="16" height="16"><use href="#foldc"/></svg>
<svg style="left:44px;top:254px" width="16" height="16"><use href="#chevR"/></svg>
<svg style="left:56px;top:254px" width="16" height="16"><use href="#cfile"/></svg>
<svg style="left:44px;top:274px" width="16" height="16"><use href="#chevR"/></svg>
<svg style="left:56px;top:274px" width="16" height="16"><use href="#cfile"/></svg>
<svg style="left:44px;top:294px" width="16" height="16"><use href="#chevR"/></svg>
<svg style="left:56px;top:294px" width="16" height="16"><use href="#cfile"/></svg>
<svg style="left:44px;top:314px" width="16" height="16"><use href="#chevR"/></svg>
<svg style="left:56px;top:314px" width="16" height="16"><use href="#cfile"/></svg>
<svg style="left:44px;top:334px" width="16" height="16"><use href="#chevR"/></svg>
<svg style="left:56px;top:334px" width="16" height="16"><use href="#cfile"/></svg>
<svg style="left:44px;top:354px" width="16" height="16"><use href="#chevR"/></svg>
<svg style="left:56px;top:354px" width="16" height="16"><use href="#cfile"/></svg>
<svg style="left:28px;top:374px" width="16" height="16"><use href="#chevR"/></svg>
<svg style="left:40px;top:375px" width="16" height="16"><use href="#foldc"/></svg>
<svg style="left:28px;top:394px" width="16" height="16"><use href="#chevR"/></svg>
<svg style="left:40px;top:395px" width="16" height="16"><use href="#fold"/></svg>
<svg style="left:28px;top:414px" width="16" height="16"><use href="#chevR"/></svg>
<svg style="left:40px;top:415px" width="16" height="16"><use href="#fold"/></svg>
<svg style="left:40px;top:434px" width="16" height="16"><use href="#cfg"/></svg>
<svg style="left:40px;top:454px" width="16" height="16"><use href="#launch"/></svg>
<svg style="left:40px;top:474px" width="16" height="16"><use href="#mx"/></svg>
<svg style="left:40px;top:494px" width="16" height="16"><use href="#ld"/></svg>
<svg style="left:2px;top:49px" width="16" height="16"><use href="#grip"/></svg>
<svg style="left:186px;top:49px" width="16" height="16"><use href="#grip"/></svg>
<svg style="left:327px;top:49px" width="16" height="16"><use href="#grip"/></svg>
<svg style="left:366px;top:49px" width="16" height="16"><use href="#grip"/></svg>
<svg style="left:617px;top:49px" width="16" height="16"><use href="#grip"/></svg>
<svg style="left:645px;top:49px" width="16" height="16"><use href="#grip"/></svg>
<svg style="left:707px;top:49px" width="16" height="16"><use href="#grip"/></svg>
<svg style="left:2px;top:76px" width="16" height="16"><use href="#grip"/></svg>
<svg style="left:10px;top:48px" width="16" height="16"><use href="#new"/></svg>
<svg style="left:42px;top:48px" width="16" height="16"><use href="#save"/></svg>
<svg style="left:66px;top:48px" width="16" height="16"><use href="#saveall"/></svg>
<svg style="left:99px;top:48px" width="16" height="16"><use href="#clock"/></svg>
<svg style="left:131px;top:48px" width="16" height="16"><use href="#hammer"/></svg>
<svg style="left:166px;top:48px" width="16" height="16"><use href="#doc010"/></svg>
<svg style="left:194px;top:48px" width="16" height="16"><use href="#cproj"/></svg>
<svg style="left:228px;top:48px" width="16" height="16"><use href="#cfold"/></svg>
<svg style="left:262px;top:48px" width="16" height="16"><use href="#cnew"/></svg>
<svg style="left:296px;top:48px" width="16" height="16"><use href="#cgreen"/></svg>
<svg style="left:336px;top:48px" width="16" height="16"><use href="#bug"/></svg>
<svg style="left:374px;top:48px" width="16" height="16"><use href="#skipbp"/></svg>
<svg style="left:404px;top:48px" width="16" height="16"><use href="#resume"/></svg>
<svg style="left:428px;top:48px" width="16" height="16"><use href="#suspend"/></svg>
<svg style="left:451px;top:48px" width="16" height="16"><use href="#term"/></svg>
<svg style="left:473px;top:48px" width="16" height="16"><use href="#disc"/></svg>
<svg style="left:497px;top:48px" width="16" height="16"><use href="#stepinto"/></svg>
<svg style="left:520px;top:48px" width="16" height="16"><use href="#stepover"/></svg>
<svg style="left:543px;top:48px" width="16" height="16"><use href="#stepret"/></svg>
<svg style="left:572px;top:48px" width="16" height="16"><use href="#lines"/></svg>
<svg style="left:596px;top:48px" width="16" height="16"><use href="#stepfilt"/></svg>
<svg style="left:623px;top:48px" width="16" height="16"><use href="#gear"/></svg>
<svg style="left:651px;top:48px" width="16" height="16"><use href="#foldballs"/></svg>
<svg style="left:675px;top:48px" width="16" height="16"><use href="#pen"/></svg>
<svg style="left:714px;top:48px" width="16" height="16"><use href="#peng"/></svg>
<svg style="left:737px;top:48px" width="16" height="16"><use href="#grayic"/></svg>
<svg style="left:760px;top:48px" width="16" height="16"><use href="#graydoc"/></svg>
<svg style="left:782px;top:48px" width="16" height="16"><use href="#pilcrow"/></svg>
<svg style="left:31px;top:54px" width="16" height="16"><use href="#dd"/></svg>
<svg style="left:119px;top:54px" width="16" height="16"><use href="#dd"/></svg>
<svg style="left:153px;top:54px" width="16" height="16"><use href="#dd"/></svg>
<svg style="left:215px;top:54px" width="16" height="16"><use href="#dd"/></svg>
<svg style="left:249px;top:54px" width="16" height="16"><use href="#dd"/></svg>
<svg style="left:283px;top:54px" width="16" height="16"><use href="#dd"/></svg>
<svg style="left:317px;top:54px" width="16" height="16"><use href="#dd"/></svg>
<svg style="left:356px;top:54px" width="16" height="16"><use href="#dd"/></svg>
<svg style="left:696px;top:54px" width="16" height="16"><use href="#dd"/></svg>
<div class="a" style="left:88px;top:47px;width:1px;height:18px;background:#7a7a7a"></div>
<div class="a" style="left:396px;top:47px;width:1px;height:18px;background:#7a7a7a"></div>
<div class="a" style="left:564px;top:47px;width:1px;height:18px;background:#7a7a7a"></div>
<div class="a" style="left:168px;top:74px;width:1px;height:18px;background:#7a7a7a"></div>
<div class="a" style="left:918px;top:75px;width:1px;height:16px;background:#7a7a7a"></div>
<svg style="left:10px;top:75px" width="16" height="16"><use href="#dl"/></svg>
<svg style="left:44px;top:75px" width="16" height="16"><use href="#ul"/></svg>
<svg style="left:77px;top:75px" width="16" height="16"><use href="#backstar"/></svg>
<svg style="left:100px;top:75px" width="16" height="16"><use href="#back"/></svg>
<svg style="left:135px;top:75px" width="16" height="16"><use href="#fwd"/></svg>
<svg style="left:176px;top:75px" width="16" height="16"><use href="#info"/></svg>
<svg style="left:896px;top:75px" width="16" height="16"><use href="#persp"/></svg>
<svg style="left:31px;top:81px" width="16" height="16"><use href="#ddg"/></svg>
<svg style="left:65px;top:81px" width="16" height="16"><use href="#ddg"/></svg>
<svg style="left:122px;top:81px" width="16" height="16"><use href="#dd"/></svg>
<svg style="left:156px;top:81px" width="16" height="16"><use href="#ddg"/></svg>
<div class="a" style="left:794px;top:72px;width:81px;height:23px;background:#fff;border:1px solid #6a6a6a"></div>
<div class="t" style="left:797px;top:76px;font-size:12.5px;letter-spacing:-0.1px;color:#333">Quick Access</div>
<svg style="left:881px;top:75px" width="16" height="16"><use href="#grip"/></svg>
<div class="a" style="left:887px;top:67px;width:1px;height:31px;background:#a8adbc"></div>
<div class="a" style="left:924px;top:73px;width:24px;height:21px;background:#cce4f7;border:1px solid #99c9ef"></div>
<svg style="left:928px;top:75px" width="16" height="16"><use href="#cpersp"/></svg>
<svg style="left:950px;top:76px" width="16" height="16"><use href="#mx"/></svg>
<svg style="left:5px;top:5px" width="16" height="16"><use href="#ide"/></svg>
<svg style="left:6px;top:106px" width="16" height="16"><use href="#projexp"/></svg>
<svg style="left:120px;top:110px" width="16" height="16"><use href="#closex"/></svg>
<svg style="left:151px;top:108px" width="16" height="16"><use href="#minb"/></svg>
<svg style="left:174px;top:108px" width="16" height="16"><use href="#maxb"/></svg>
<svg style="left:929px;top:108px" width="16" height="16"><use href="#minb"/></svg>
<svg style="left:952px;top:108px" width="16" height="16"><use href="#maxb"/></svg>
<svg style="left:622px;top:360px" width="16" height="16"><use href="#minb"/></svg>
<svg style="left:643px;top:360px" width="16" height="16"><use href="#maxb"/></svg>
<svg style="left:929px;top:360px" width="16" height="16"><use href="#minb"/></svg>
<svg style="left:952px;top:360px" width="16" height="16"><use href="#maxb"/></svg>
<svg style="left:123px;top:134px" width="16" height="16"><use href="#collapse"/></svg>
<svg style="left:145px;top:133px" width="16" height="16"><use href="#link"/></svg>
<svg style="left:176px;top:136px" width="16" height="16"><use href="#vmenu"/></svg>
<svg style="left:208px;top:107px" width="16" height="16"><use href="#mxl"/></svg>
<svg style="left:343px;top:107px" width="16" height="16"><use href="#cfile"/></svg>
<svg style="left:407px;top:110px" width="16" height="16"><use href="#closex"/></svg>
<svg style="left:207px;top:358px" width="16" height="16"><use href="#problems"/></svg>
<svg style="left:291px;top:358px" width="16" height="16"><use href="#tasks"/></svg>
<svg style="left:353px;top:359px" width="16" height="16"><use href="#console"/></svg>
<svg style="left:428px;top:362px" width="16" height="16"><use href="#closex"/></svg>
<svg style="left:448px;top:359px" width="16" height="16"><use href="#properties"/></svg>
<svg style="left:375px;top:387px" width="16" height="16"><use href="#stopg"/></svg>
<svg style="left:397px;top:386px" width="16" height="16"><use href="#xg"/></svg>
<svg style="left:420px;top:385px" width="16" height="16"><use href="#xxg"/></svg>
<div class="a" style="left:441px;top:384px;width:1px;height:18px;background:#7a7a7a"></div>
<svg style="left:451px;top:385px" width="16" height="16"><use href="#docx"/></svg>
<svg style="left:474px;top:385px" width="16" height="16"><use href="#lockic"/></svg>
<svg style="left:497px;top:385px" width="16" height="16"><use href="#docarr"/></svg>
<div class="a" style="left:516px;top:383px;width:23px;height:20px;background:#cce8ff;border:1px solid #99d1ff"></div>
<div class="a" style="left:539px;top:383px;width:23px;height:20px;background:#cce8ff;border:1px solid #99d1ff"></div>
<svg style="left:519px;top:385px" width="16" height="16"><use href="#monsel"/></svg>
<svg style="left:542px;top:385px" width="16" height="16"><use href="#monx"/></svg>
<div class="a" style="left:564px;top:384px;width:1px;height:18px;background:#7a7a7a"></div>
<svg style="left:575px;top:385px" width="16" height="16"><use href="#pin"/></svg>
<svg style="left:598px;top:385px" width="16" height="16"><use href="#monbig"/></svg>
<svg style="left:618px;top:391px" width="16" height="16"><use href="#dd"/></svg>
<svg style="left:631px;top:385px" width="16" height="16"><use href="#new"/></svg>
<svg style="left:652px;top:391px" width="16" height="16"><use href="#dd"/></svg>
<svg style="left:680px;top:360px" width="16" height="16"><use href="#build"/></svg>
<svg style="left:755px;top:360px" width="16" height="16"><use href="#static"/></svg>
<svg style="left:832px;top:359px" width="16" height="16"><use href="#bugt"/></svg>
<svg style="left:897px;top:362px" width="16" height="16"><use href="#closex"/></svg>
<svg style="left:862px;top:386px" width="16" height="16"><use href="#relaunch"/></svg>
<div class="a" style="left:883px;top:384px;width:1px;height:18px;background:#7a7a7a"></div>
<svg style="left:893px;top:385px" width="16" height="16"><use href="#xxg"/></svg>
<div class="a" style="left:914px;top:384px;width:1px;height:18px;background:#7a7a7a"></div>
<svg style="left:923px;top:386px" width="16" height="16"><use href="#iarrow"/></svg>
<svg style="left:955px;top:388px" width="16" height="16"><use href="#vmenu"/></svg>
<svg style="left:683px;top:406px" width="16" height="16"><use href="#chevR"/></svg>
<svg style="left:695px;top:406px" width="16" height="16"><use href="#ide"/></svg>
<div class="a" style="left:621px;top:720px;width:35px;height:22px;border-top:1px solid #f4f6fc;border-left:1px solid #f4f6fc;border-right:1px solid #a0a0a0;border-bottom:1px solid #a0a0a0"></div>
<svg style="left:625px;top:723px" width="16" height="16"><use href="#stbtn"/></svg>
<svg style="left:657px;top:725px" width="16" height="16"><use href="#grip"/></svg>
<svg style="left:954px;top:725px" width="16" height="16"><use href="#stright"/></svg>
<svg style="left:948px;top:134px" width="16" height="16"><use href="#sUp"/></svg>
<svg style="left:948px;top:317px" width="16" height="16"><use href="#sDown"/></svg>
<svg style="left:252px;top:333px" width="16" height="16"><use href="#sLeftL"/></svg>
<svg style="left:933px;top:332px" width="16" height="16"><use href="#sRightL"/></svg>
<svg style="left:653px;top:427px" width="16" height="16"><use href="#sUp"/></svg>
<svg style="left:653px;top:689px" width="16" height="16"><use href="#sDown"/></svg>
<svg style="left:208px;top:705px" width="16" height="16"><use href="#sLeft"/></svg>
<svg style="left:638px;top:704px" width="16" height="16"><use href="#sRight"/></svg>
<svg style="left:8px;top:705px" width="16" height="16"><use href="#sLeft"/></svg>
<svg style="left:184px;top:705px" width="16" height="16"><use href="#sRight"/></svg>
<svg style="left:679px;top:704px" width="16" height="16"><use href="#sLeft"/></svg>
<svg style="left:962px;top:704px" width="16" height="16"><use href="#sRight"/></svg>
</body></html>
